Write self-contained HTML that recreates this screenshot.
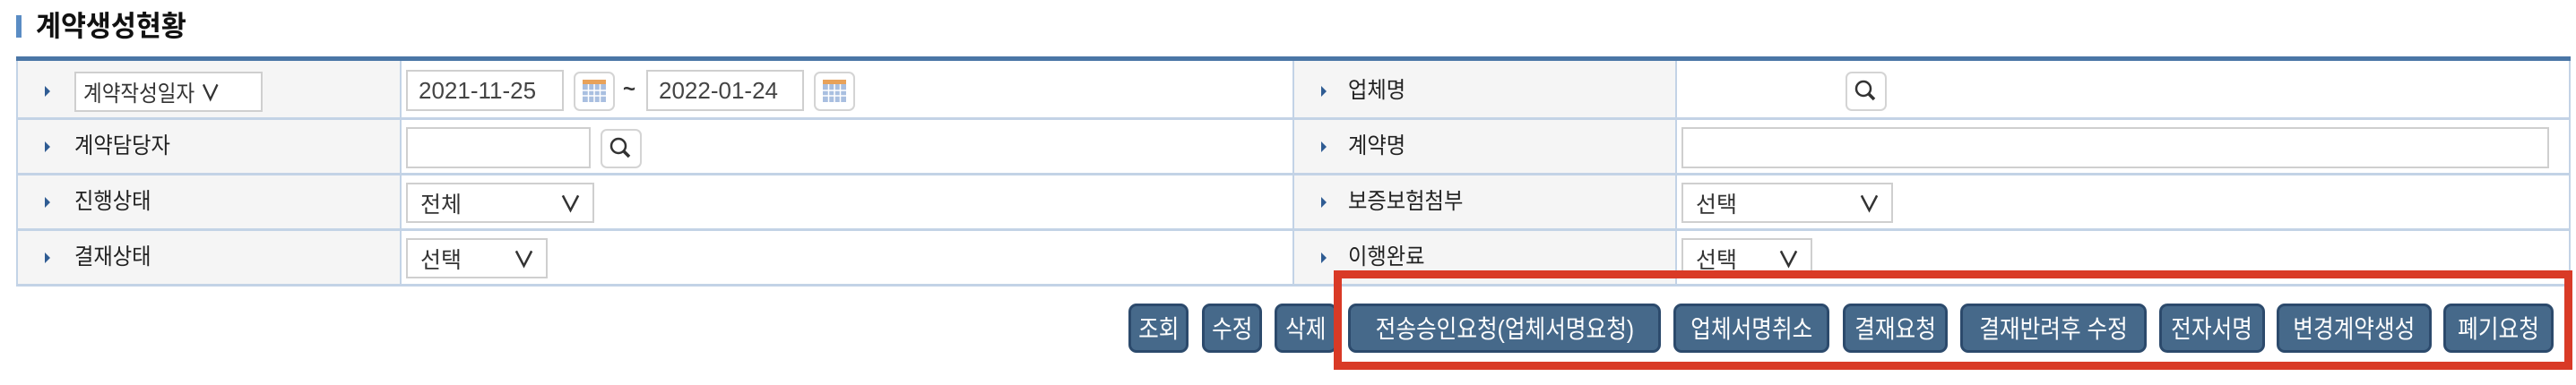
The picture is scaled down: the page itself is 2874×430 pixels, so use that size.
<!DOCTYPE html>
<html><head><meta charset="utf-8"><style>
body{margin:0;width:2874px;height:430px;background:#fff;position:relative;overflow:hidden;font-family:"Liberation Sans","Noto Sans CJK KR",sans-serif;}
.a{position:absolute;box-sizing:border-box}
.lab{background:#f5f5f5}
.t{font-size:25px;color:#222;line-height:28px;transform:scaleX(.93);transform-origin:left}
.arr{width:0;height:0;border-top:6px solid transparent;border-bottom:6px solid transparent;border-left:6px solid #2f5c93}
.inp{border:2px solid #cfcfcf;background:#fff;font-size:26px;color:#444;padding-left:12px;display:flex;align-items:center}
.sel{border:2px solid #cfcfcf;background:#fff;font-size:25px;color:#333;padding-left:14px;display:flex;align-items:center}
.ib{border:2px solid #d4d4d4;border-radius:7px;background:#fff}
.btn{top:339px;height:55px;background:#46698a;border:3px solid #2c4a6c;border-radius:9px;color:#fff;font-size:28px;display:flex;align-items:flex-end;justify-content:center;padding-bottom:5px;white-space:nowrap;overflow:hidden}
.btn span{display:inline-block;transform:scaleX(.88)}
</style></head><body>
<div class="a" style="left:18px;top:17px;width:6px;height:25px;background:#5a8cc4"></div>
<div class="a" style="left:40px;top:10px;font-size:32px;font-weight:bold;color:#111;line-height:38px;transform:scaleX(.95);transform-origin:left">계약생성현황</div>

<div class="a" style="left:18px;top:63px;width:2850px;height:5px;background:#4a76a6"></div>
<div class="a lab" style="left:18px;top:68px;width:428px;height:250px"></div>
<div class="a lab" style="left:1443px;top:68px;width:427px;height:250px"></div>
<div class="a" style="left:18px;top:68px;width:2850px;height:252px;border-left:2px solid #c3d3e6;border-right:2px solid #c3d3e6"></div>
<div class="a" style="left:446px;top:68px;width:2px;height:250px;background:#c3d3e6"></div>
<div class="a" style="left:1442px;top:68px;width:2px;height:250px;background:#c3d3e6"></div>
<div class="a" style="left:1869px;top:68px;width:2px;height:250px;background:#c3d3e6"></div>
<div class="a" style="left:18px;top:131px;width:2850px;height:3px;background:#c3d3e6"></div>
<div class="a" style="left:18px;top:193px;width:2850px;height:3px;background:#c3d3e6"></div>
<div class="a" style="left:18px;top:255px;width:2850px;height:3px;background:#c3d3e6"></div>
<div class="a" style="left:18px;top:317px;width:2850px;height:3px;background:#c3d3e6"></div>

<div class="a arr" style="left:50px;top:96px"></div>
<div class="a arr" style="left:50px;top:158px"></div>
<div class="a arr" style="left:50px;top:220px"></div>
<div class="a arr" style="left:50px;top:282px"></div>
<div class="a sel" style="left:83px;top:80px;width:210px;height:45px;padding-left:8px"><span style="transform:scaleX(.9);transform-origin:left;display:inline-block;white-space:nowrap">계약작성일자 <b>∨</b></span></div>
<div class="a t" style="left:83px;top:149px">계약담당자</div>
<div class="a t" style="left:83px;top:211px">진행상태</div>
<div class="a t" style="left:83px;top:273px">결재상태</div>

<div class="a inp" style="left:453px;top:78px;width:176px;height:46px">2021-11-25</div>
<div class="a ib" style="left:640px;top:80px;width:46px;height:44px">
<svg width="42" height="40" viewBox="0 0 42 40"><rect x="8" y="7" width="26" height="5" fill="#e8a25a"/><rect x="8" y="12" width="26" height="20" fill="#a9bfe0"/><g stroke="#fff" stroke-width="1.5"><line x1="8" y1="19" x2="34" y2="19"/><line x1="8" y1="25" x2="34" y2="25"/><line x1="14.5" y1="12" x2="14.5" y2="32"/><line x1="21" y1="12" x2="21" y2="32"/><line x1="27.5" y1="12" x2="27.5" y2="32"/></g></svg></div>
<div class="a" style="left:695px;top:86px;font-size:24px;color:#333;font-weight:bold">~</div>
<div class="a inp" style="left:721px;top:78px;width:176px;height:46px">2022-01-24</div>
<div class="a ib" style="left:908px;top:80px;width:46px;height:44px">
<svg width="42" height="40" viewBox="0 0 42 40"><rect x="8" y="7" width="26" height="5" fill="#e8a25a"/><rect x="8" y="12" width="26" height="20" fill="#a9bfe0"/><g stroke="#fff" stroke-width="1.5"><line x1="8" y1="19" x2="34" y2="19"/><line x1="8" y1="25" x2="34" y2="25"/><line x1="14.5" y1="12" x2="14.5" y2="32"/><line x1="21" y1="12" x2="21" y2="32"/><line x1="27.5" y1="12" x2="27.5" y2="32"/></g></svg></div>

<div class="a inp" style="left:453px;top:142px;width:206px;height:46px"></div>
<div class="a ib" style="left:670px;top:144px;width:46px;height:44px"><svg width="42" height="40" viewBox="0 0 42 40"><circle cx="18" cy="17" r="8" fill="none" stroke="#333" stroke-width="2.5"/><line x1="24" y1="23" x2="30" y2="29" stroke="#333" stroke-width="3.5"/></svg></div>

<div class="a sel" style="left:453px;top:204px;width:210px;height:45px">전체<span style="position:absolute;right:12px;font-weight:bold">∨</span></div>
<div class="a sel" style="left:453px;top:266px;width:158px;height:45px">선택<span style="position:absolute;right:12px;font-weight:bold">∨</span></div>

<div class="a arr" style="left:1474px;top:96px"></div>
<div class="a arr" style="left:1474px;top:158px"></div>
<div class="a arr" style="left:1474px;top:220px"></div>
<div class="a arr" style="left:1474px;top:282px"></div>
<div class="a t" style="left:1504px;top:87px">업체명</div>
<div class="a t" style="left:1504px;top:149px">계약명</div>
<div class="a t" style="left:1504px;top:211px">보증보험첨부</div>
<div class="a t" style="left:1504px;top:273px">이행완료</div>
<div class="a ib" style="left:2059px;top:80px;width:46px;height:44px"><svg width="42" height="40" viewBox="0 0 42 40"><circle cx="18" cy="17" r="8" fill="none" stroke="#333" stroke-width="2.5"/><line x1="24" y1="23" x2="30" y2="29" stroke="#333" stroke-width="3.5"/></svg></div>
<div class="a inp" style="left:1876px;top:142px;width:968px;height:46px"></div>
<div class="a sel" style="left:1876px;top:204px;width:236px;height:45px">선택<span style="position:absolute;right:12px;font-weight:bold">∨</span></div>
<div class="a sel" style="left:1876px;top:266px;width:146px;height:45px">선택<span style="position:absolute;right:12px;font-weight:bold">∨</span></div>

<div class="a btn" style="left:1259px;width:67px"><span>조회</span></div>
<div class="a btn" style="left:1341px;width:67px"><span>수정</span></div>
<div class="a btn" style="left:1422px;width:70px"><span>삭제</span></div>
<div class="a btn" style="left:1504px;width:349px"><span>전송승인요청(업체서명요청)</span></div>
<div class="a btn" style="left:1867px;width:174px"><span>업체서명취소</span></div>
<div class="a btn" style="left:2056px;width:117px"><span>결재요청</span></div>
<div class="a btn" style="left:2187px;width:208px"><span>결재반려후 수정</span></div>
<div class="a btn" style="left:2409px;width:118px"><span>전자서명</span></div>
<div class="a btn" style="left:2540px;width:173px"><span>변경계약생성</span></div>
<div class="a btn" style="left:2726px;width:123px"><span>폐기요청</span></div>

<div class="a" style="left:1488px;top:302px;width:1382px;height:111px;border:9px solid #d93a26"></div>
</body></html>
